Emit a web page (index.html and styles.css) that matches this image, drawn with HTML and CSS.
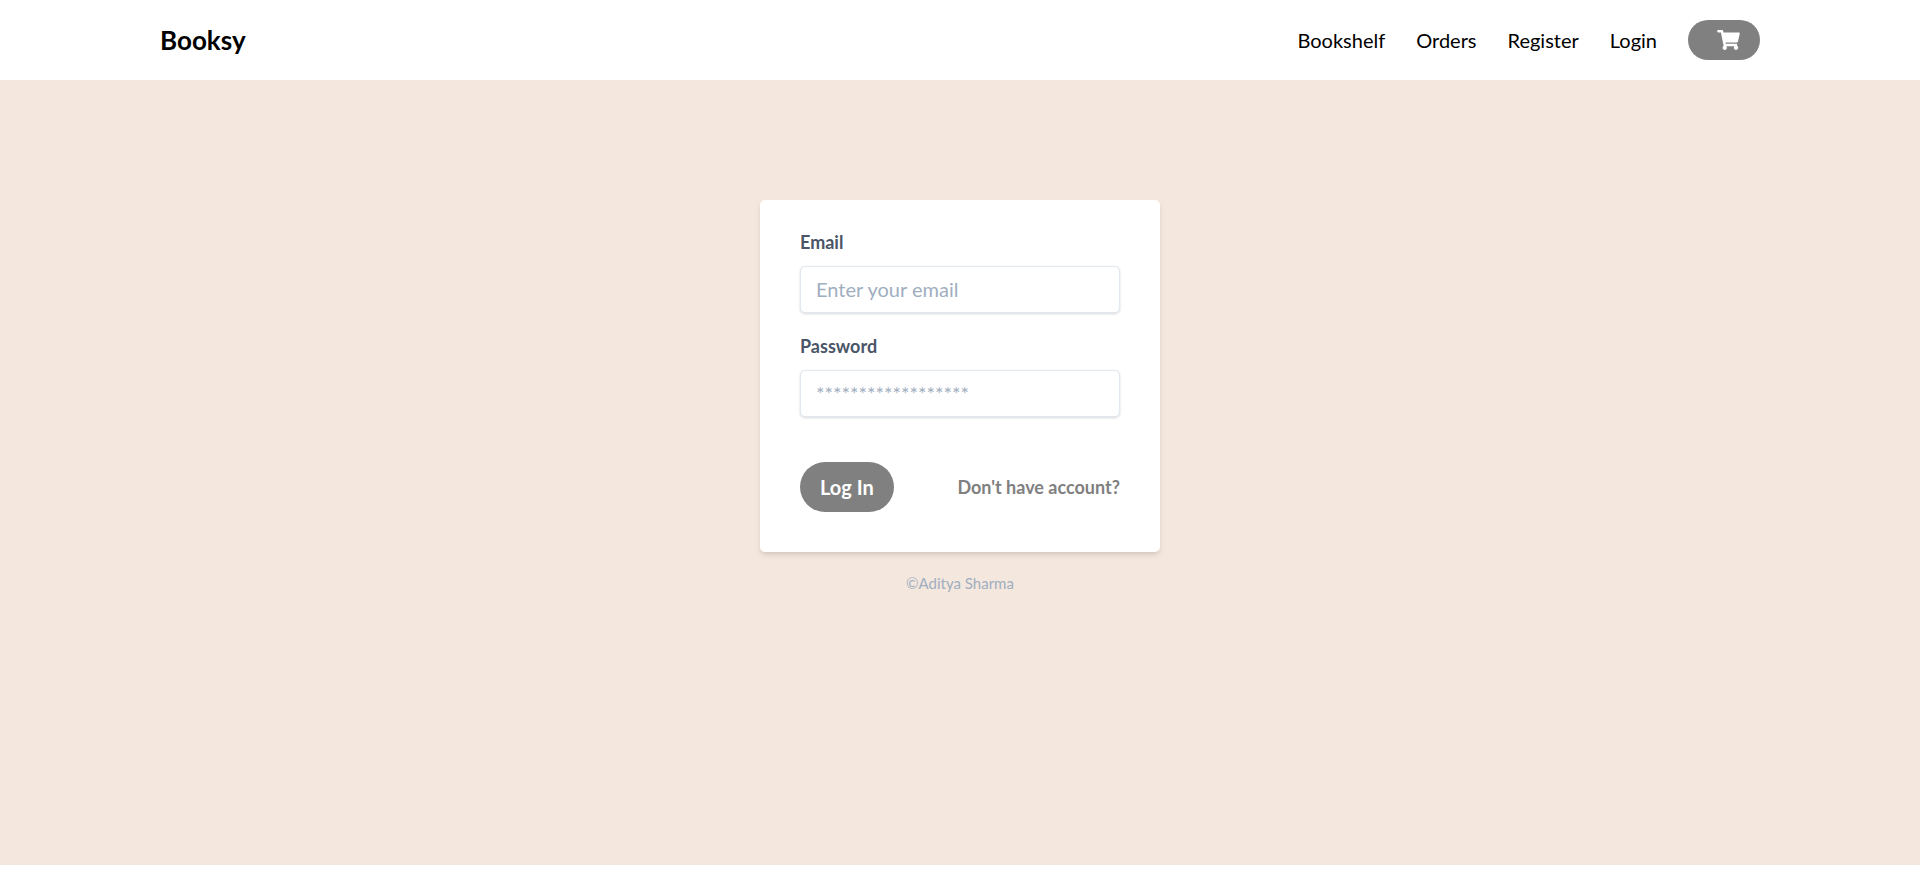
FILE: index.html
```html
<!DOCTYPE html>
<html lang="en">
<head>
  <meta charset="utf-8">
  <meta name="viewport" content="width=device-width, initial-scale=1">
  <title>Booksy</title>
  <link rel="stylesheet" href="styles.css">
</head>
<body>
  <header class="navbar">
    <a class="brand" href="#">Booksy</a>
    <nav class="nav-links">
      <a href="#">Bookshelf</a>
      <a href="#">Orders</a>
      <a href="#">Register</a>
      <a href="#">Login</a>
      <a class="cart" href="#" aria-label="Cart">
        <svg class="cart-icon" viewBox="0 0 576 512" aria-hidden="true"><path fill="currentColor" d="M528.12 301.319l47.273-208C578.806 78.301 567.391 64 551.99 64H159.208l-9.166-44.81C147.758 8.021 137.93 0 126.529 0H24C10.745 0 0 10.745 0 24v16c0 13.255 10.745 24 24 24h69.883l70.248 343.435C147.325 417.1 136 435.222 136 456c0 30.928 25.072 56 56 56s56-25.072 56-56c0-15.674-6.447-29.835-16.824-40h209.647C430.447 426.165 424 440.326 424 456c0 30.928 25.072 56 56 56s56-25.072 56-56c0-22.172-12.888-41.332-31.579-50.405l5.517-24.276c3.413-15.018-8.002-29.319-23.403-29.319H218.117l-6.545-32h293.145c11.206 0 20.92-7.754 23.403-18.681z"/></svg>
      </a>
    </nav>
  </header>
  <main class="page">
    <form class="card">
      <div class="field">
        <label for="email">Email</label>
        <input id="email" type="email" placeholder="Enter your email">
      </div>
      <div class="field">
        <label for="password">Password</label>
        <input id="password" type="password" placeholder="******************">
      </div>
      <div class="actions">
        <button class="submit" type="button">Log In</button>
        <a class="register-link" href="#">Don't have account?</a>
      </div>
    </form>
    <p class="copyright">©Aditya Sharma</p>
  </main>
</body>
</html>
```
FILE: styles.css
```css
*, *::before, *::after {
  box-sizing: border-box;
}

body {
  margin: 0;
  background: #fff;
  color: #000;
  font-family: Lato, "Liberation Sans", sans-serif;
  font-size: 20px;
  line-height: 30px;
}

a {
  color: inherit;
  text-decoration: none;
}

.navbar {
  display: flex;
  align-items: center;
  justify-content: space-between;
  padding: 20px 160px;
}

.brand {
  font-size: 26px;
  font-weight: 700;
}

.nav-links {
  display: flex;
  align-items: center;
  gap: 31px;
}

.cart {
  display: flex;
  align-items: center;
  height: 40px;
  padding: 0 20px 0 29px;
  border-radius: 20px;
  background: #808080;
  color: #fff;
}

.cart-icon {
  width: 23px;
  height: 20px;
}

.page {
  display: flex;
  flex-direction: column;
  align-items: center;
  gap: 20px;
  min-height: calc(100vh - 102px);
  padding: 120px 20px 20px;
  background: #f4e7de;
}

.card {
  width: 100%;
  max-width: 400px;
  padding: 30px 40px 40px;
  border-radius: 5px;
  background: #fff;
  box-shadow: 0 4px 6px -1px rgba(0, 0, 0, 0.1), 0 2px 4px -1px rgba(0, 0, 0, 0.06);
}

.field {
  display: flex;
  flex-direction: column;
  gap: 12px;
  margin-bottom: 21px;
}

.field label {
  color: #4a5568;
  font-size: 18px;
  font-weight: 700;
  line-height: 24px;
}

.field input {
  width: 100%;
  padding: 10px 15px;
  border: 1px solid #e2e8f0;
  border-radius: 5px;
  background: #fff;
  color: #4a5568;
  font: inherit;
  line-height: 25px;
  box-shadow: 0 1px 3px 0 rgba(0, 0, 0, 0.1), 0 1px 2px 0 rgba(0, 0, 0, 0.06);
}

.field input::placeholder {
  color: #a0aec0;
  opacity: 1;
}

.actions {
  display: flex;
  align-items: center;
  justify-content: space-between;
  padding-top: 24px;
}

.submit {
  padding: 10px 20px;
  border: 0;
  border-radius: 25px;
  background: #808080;
  color: #fff;
  font: inherit;
  font-weight: 700;
  cursor: pointer;
}

.register-link {
  color: #808080;
  font-size: 18px;
  font-weight: 700;
}

.copyright {
  margin: 0;
  color: #a0aec0;
  font-size: 15px;
  line-height: 22px;
}
```
